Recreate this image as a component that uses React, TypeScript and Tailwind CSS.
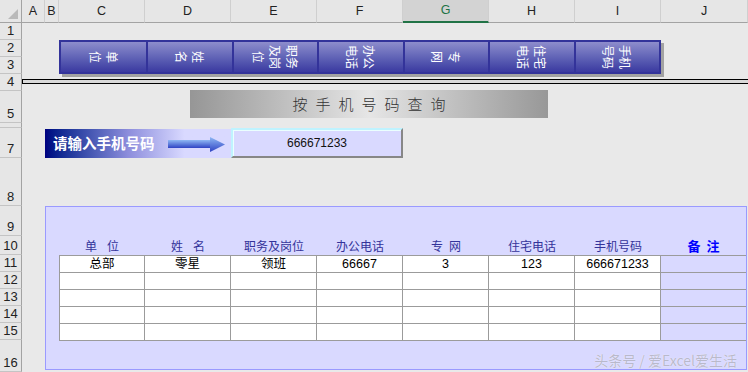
import React from 'react';

const colHeads = [
  { label: 'A', cls: 'col-start-2' },
  { label: 'B', cls: 'col-start-3' },
  { label: 'C', cls: 'col-start-4' },
  { label: 'D', cls: 'col-start-5' },
  { label: 'E', cls: 'col-start-6' },
  { label: 'F', cls: 'col-start-7' },
  { label: 'G', cls: 'col-start-8', active: true },
  { label: 'H', cls: 'col-start-9' },
  { label: 'I', cls: 'col-start-10' },
  { label: 'J', cls: 'col-start-11' },
];

const rowHeads = [
  { label: '1', cls: 'row-start-2' },
  { label: '2', cls: 'row-start-3' },
  { label: '3', cls: 'row-start-4' },
  { label: '4', cls: 'row-start-5' },
  { label: '5', cls: 'row-start-6' },
  { label: '', cls: 'row-start-7' },
  { label: '7', cls: 'row-start-8' },
  { label: '8', cls: 'row-start-9' },
  { label: '9', cls: 'row-start-10' },
  { label: '10', cls: 'row-start-11' },
  { label: '11', cls: 'row-start-12' },
  { label: '12', cls: 'row-start-13' },
  { label: '13', cls: 'row-start-14' },
  { label: '14', cls: 'row-start-15' },
  { label: '15', cls: 'row-start-16' },
  { label: '16', cls: 'row-start-17' },
];

// text in the buttons is turned 90° clockwise, one wrapped line per entry
const buttons = [
  ['单', '位'],
  ['姓', '名'],
  ['职务', '及岗', '位'],
  ['办公', '电话'],
  ['专', '网'],
  ['住宅', '电话'],
  ['手机', '号码'],
];

const headers = [
  { parts: ['单', '位'], gap: 'gap-[10px]' },
  { parts: ['姓', '名'], gap: 'gap-[10px]' },
  { parts: ['职务及岗位'], gap: '' },
  { parts: ['办公电话'], gap: '' },
  { parts: ['专', '网'], gap: 'gap-[6px]' },
  { parts: ['住宅电话'], gap: '' },
  { parts: ['手机号码'], gap: '' },
];

const rows = [
  ['总部', '零星', '领班', '66667', '3', '123', '666671233'],
  ['', '', '', '', '', '', ''],
  ['', '', '', '', '', '', ''],
  ['', '', '', '', '', '', ''],
  ['', '', '', '', '', '', ''],
];

const titleChars = ['按', '手', '机', '号', '码', '查', '询'];

function Arrow() {
  return (
    <svg width="57" height="15" viewBox="0 0 57 15">
      <defs>
        <linearGradient id="arr" x1="0" y1="0" x2="0" y2="1">
          <stop offset="0" stopColor="#8fb8f4" />
          <stop offset="1" stopColor="#2f43c4" />
        </linearGradient>
      </defs>
      <rect x="0" y="3" width="43" height="8" fill="url(#arr)" />
      <polygon points="42,0 57,7.5 42,15" fill="url(#arr)" />
    </svg>
  );
}

export default function App() {
  return (
    <div className="w-[748px] h-[372px] overflow-hidden bg-[#e9e9e9] font-['Liberation_Sans','Noto_Sans_CJK_SC',sans-serif] text-[#222]">
      <div className="grid grid-cols-[22px_23px_14px_86px_86px_86px_86px_86px_86px_86px_87px] grid-rows-[23px_17px_17px_17px_17px_32px_5px_30px_48px_30px_19px_17px_17px_17px_17px_17px_32px]">
        {/* corner */}
        <div className="col-start-1 row-start-1 flex items-end justify-end border-b border-r border-[#a3a3a3] bg-[#e6e6e6]">
          <div className="mr-[3px] mb-[3px] h-0 w-0 border-l-[10px] border-b-[10px] border-l-transparent border-b-[#b9b9b9]" />
        </div>

        {/* column headers */}
        {colHeads.map((c) => (
          <div
            key={c.label}
            className={`${c.cls} row-start-1 flex items-center justify-center border-r border-r-[#cfcfcf] text-[12.5px] ${
              c.active
                ? 'bg-[#d3d3d3] border-b-2 border-b-[#217346] text-[#217346]'
                : 'bg-[#e6e6e6] border-b border-b-[#a3a3a3]'
            }`}
          >
            {c.label}
          </div>
        ))}

        {/* row headers */}
        {rowHeads.map((r, i) => (
          <div
            key={i}
            className={`col-start-1 ${r.cls} flex items-end justify-center overflow-hidden border-b border-b-[#c4c4c4] border-r border-r-[#a3a3a3] bg-[#e6e6e6] pb-px text-[13px] leading-[15px]`}
          >
            {r.label}
          </div>
        ))}

        {/* buttons C..I, rows 2-3 */}
        <div className="col-start-4 col-span-7 row-start-3 row-span-2 grid grid-cols-7 border-2 border-[#33339a] shadow-[3px_3px_0_#a2a2a2]">
          {buttons.map((lines, i) => (
            <div
              key={i}
              className={`flex items-center justify-center bg-linear-to-b from-[#8e8dcc] to-[#3b39a0] ${
                i > 0 ? 'border-l-2 border-[#33339a]' : ''
              }`}
            >
              <div className="[writing-mode:vertical-rl] [text-orientation:sideways] font-['Noto_Sans_CJK_SC',sans-serif] text-[12px] leading-[17px] text-white">
                {lines.map((l, j) => (
                  <span key={j} className="block text-center">
                    {l}
                  </span>
                ))}
              </div>
            </div>
          ))}
        </div>

        {/* double rule on row 4 */}
        <div className="col-start-2 col-span-10 row-start-5 mt-[5px] h-[5px] self-start border-y border-l border-black bg-[#d9d9d9]" />

        {/* title bar */}
        <div className="col-start-4 col-span-8 row-start-6 -mt-px self-start">
          <div className="ml-[131px] flex h-[28px] w-[358px] items-center justify-center gap-[8px] bg-linear-to-r from-[#969696] via-[#e6e6e6] to-[#989898] font-['Noto_Sans_CJK_SC',sans-serif] text-[15px] font-light text-[#333]">
            {titleChars.map((c) => (
              <span key={c}>{c}</span>
            ))}
          </div>
        </div>

        {/* input label */}
        <div className="col-start-3 col-span-3 row-start-8 mt-px flex items-center bg-linear-to-r from-[#000080] via-[#8e8edc] via-45% to-[#d9d9ff] to-75% pl-[8px]">
          <span className="font-['Noto_Sans_CJK_SC',sans-serif] text-[14.5px] font-bold leading-none text-white">
            请输入手机号码
          </span>
          <div className="ml-[13px] mt-px">
            <Arrow />
          </div>
        </div>

        {/* input box */}
        <div className="col-start-6 col-span-2 row-start-8 flex items-center justify-center border-2 border-t-[#bff3ff] border-l-[#bff3ff] border-b-[#878787] border-r-[#878787] bg-[#d9d9ff] text-[12px] text-[#111] shadow-[inset_1px_1px_0_#eaffff]">
          666671233
        </div>

        {/* result panel */}
        <div className="relative col-start-3 col-span-9 row-start-10 row-span-8 mr-px h-[164px] self-start border border-[#9a9aff] bg-[#d9d9ff] pl-[13px] pt-[29px]">
          <div className="grid h-[19px] grid-cols-[86px_86px_86px_86px_86px_86px_86px_1fr] items-center font-['Noto_Sans_CJK_SC',sans-serif] text-[12px] text-[#33339a]">
            {headers.map((h, i) => (
              <div key={i} className={`flex justify-center ${h.gap}`}>
                {h.parts.map((p) => (
                  <span key={p}>{p}</span>
                ))}
              </div>
            ))}
            <div className="flex justify-center gap-[6px] text-[13px] font-bold text-[#0000ff]">
              <span>备</span>
              <span>注</span>
            </div>
          </div>
          <div className="grid grid-cols-[85px_86px_86px_86px_86px_86px_86px_1fr] border-t border-l border-[#9b9b9b] text-[12.5px] text-black">
            {rows.map((r, ri) => (
              <React.Fragment key={ri}>
                {r.map((v, ci) => (
                  <div
                    key={ci}
                    className="flex h-[17px] items-center justify-center border-r border-b border-[#9b9b9b] bg-white leading-none"
                  >
                    {v}
                  </div>
                ))}
                <div className="h-[17px] border-b border-[#9b9b9b]" />
              </React.Fragment>
            ))}
          </div>
          <div className="absolute right-[9px] top-[143px] font-['Noto_Sans_CJK_SC',sans-serif] text-[14px] leading-[20px] text-[#b9b9cb] [text-shadow:0_0_1px_#ffffff]">
            头条号 / 爱Excel爱生活
          </div>
        </div>
      </div>
    </div>
  );
}
